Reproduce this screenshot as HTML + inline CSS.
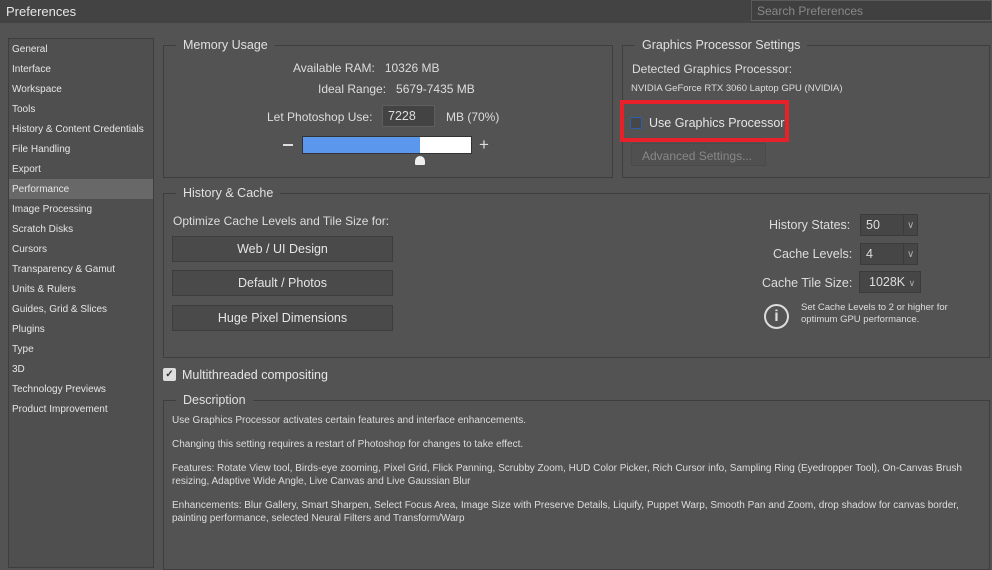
<!DOCTYPE html>
<html><head><style>
*{box-sizing:border-box;margin:0;padding:0}
body{width:992px;height:555px;background:#535353;font-family:"Liberation Sans",sans-serif;color:#ddd;position:relative;overflow:hidden}
.a{position:absolute;white-space:nowrap}
.title{left:0;top:0;width:992px;height:23px;background:#434343}
.fs{position:absolute;border:1px solid #3e3e3e}
.lg{position:absolute;top:-8px;left:12px;background:#535353;padding:0 7px;font-size:12.5px;color:#e0e0e0}
.side{left:8px;top:38px;width:146px;height:530px;border:1px solid #3e3e3e;background:#4f4f4f}
.side div{height:20px;line-height:21px;padding-left:3px;font-size:10px;color:#e6e6e6}
.btn{position:absolute;left:172px;width:221px;height:26px;background:#4a4a4a;border:1px solid #3d3d3d;text-align:center;line-height:25px;font-size:12.5px;color:#e6e6e6}
.sel{position:absolute;height:22px;border:1px solid #3b3b3b;background:#464646;font-size:12.5px;line-height:21px;padding-left:5px}
.sm{font-size:9.5px;color:#ddd}
.d{font-size:10px;color:#ddd}
</style></head><body>
<div class="a title"></div>
<div class="a" style="left:6px;top:4px;font-size:13px;color:#e6e6e6">Preferences</div>
<div class="a" style="left:751px;top:0;width:241px;height:21px;border:1px solid #5a5a5a;background:#404040;font-size:12px;color:#888;padding:3px 5px">Search Preferences</div>

<div class="a side">
<div>General</div><div>Interface</div><div>Workspace</div><div>Tools</div><div>History &amp; Content Credentials</div><div>File Handling</div><div>Export</div><div style="background:#686868">Performance</div><div>Image Processing</div><div>Scratch Disks</div><div>Cursors</div><div>Transparency &amp; Gamut</div><div>Units &amp; Rulers</div><div>Guides, Grid &amp; Slices</div><div>Plugins</div><div>Type</div><div>3D</div><div>Technology Previews</div><div>Product Improvement</div>
</div>

<div class="fs" style="left:163px;top:45px;width:450px;height:133px"><div class="lg">Memory Usage</div></div>
<div class="a" style="left:293px;top:61px;font-size:12px">Available RAM:&nbsp;&nbsp;&nbsp;10326 MB</div>
<div class="a" style="left:318px;top:82px;font-size:12px">Ideal Range:&nbsp;&nbsp;&nbsp;5679-7435 MB</div>
<div class="a" style="left:267px;top:110px;font-size:12px">Let Photoshop Use:</div>
<div class="a" style="left:382px;top:105px;width:53px;height:22px;background:#434343;border:1px solid #5e5e5e;font-size:12.5px;padding:3px 5px">7228</div>
<div class="a" style="left:446px;top:110px;font-size:12px">MB (70%)</div>
<div class="a" style="left:283px;top:144px;width:10px;height:2px;background:#ddd"></div>
<div class="a" style="left:302px;top:136px;width:170px;height:18px;background:#fff;border:1px solid #333"></div>
<div class="a" style="left:303px;top:137px;width:117px;height:16px;background:#5b97ec"></div>
<div class="a" style="left:415px;top:156px;width:10px;height:9px;background:#eee;border-radius:5px 5px 1px 1px"></div>
<div class="a" style="left:479px;top:137px;font-size:17px;line-height:15px">+</div>

<div class="fs" style="left:622px;top:45px;width:368px;height:133px"><div class="lg">Graphics Processor Settings</div></div>
<div class="a" style="left:632px;top:62px;font-size:12px">Detected Graphics Processor:</div>
<div class="a" style="left:631px;top:83px;font-size:9.5px">NVIDIA GeForce RTX 3060 Laptop GPU (NVIDIA)</div>
<div class="a" style="left:620px;top:100px;width:169px;height:42px;border:4px solid #e8202a"></div>
<div class="a" style="left:630px;top:117px;width:12px;height:12px;border:1px solid #2f5ea8;background:#474747;border-radius:2px"></div>
<div class="a" style="left:649px;top:116px;font-size:12.5px;color:#e6e6e6">Use Graphics Processor</div>
<div class="a" style="left:631px;top:143px;width:135px;height:23px;border:1px solid #4a4a4a;background:#505050;font-size:12px;color:#888;padding:5px 10px">Advanced Settings...</div>

<div class="fs" style="left:163px;top:193px;width:827px;height:165px"><div class="lg">History &amp; Cache</div></div>
<div class="a" style="left:173px;top:214px;font-size:12px">Optimize Cache Levels and Tile Size for:</div>
<div class="btn" style="top:236px">Web / UI Design</div>
<div class="btn" style="top:270px">Default / Photos</div>
<div class="btn" style="top:305px">Huge Pixel Dimensions</div>
<div class="a" style="left:769px;top:218px;font-size:12.5px">History States:</div>
<div class="sel" style="left:860px;top:214px;width:58px">50<span style="position:absolute;left:42px;top:0;height:20px;border-left:1px solid #3b3b3b;padding-left:3px;font-size:10px;color:#aaa">&#8744;</span></div>
<div class="a" style="left:773px;top:247px;font-size:12.5px">Cache Levels:</div>
<div class="sel" style="left:860px;top:243px;width:58px">4<span style="position:absolute;left:42px;top:0;height:20px;border-left:1px solid #3b3b3b;padding-left:3px;font-size:10px;color:#aaa">&#8744;</span></div>
<div class="a" style="left:762px;top:276px;font-size:12.5px">Cache Tile Size:</div>
<div class="sel" style="left:859px;top:271px;width:62px;padding-left:9px">1028K <span style="font-size:9px;color:#aaa">&#8744;</span></div>
<div class="a" style="left:764px;top:304px;width:25px;height:25px;border:2px solid #ddd;border-radius:50%;text-align:center;font-size:16px;font-weight:bold;line-height:21px">i</div>
<div class="a sm" style="left:801px;top:302px;line-height:12px">Set Cache Levels to 2 or higher for<br>optimum GPU performance.</div>

<div class="a" style="left:163px;top:368px;width:13px;height:13px;background:#ddd;border-radius:2px;color:#333;font-size:10px;line-height:13px;text-align:center;font-weight:bold">&#10003;</div>
<div class="a" style="left:182px;top:368px;font-size:12.5px;color:#e6e6e6">Multithreaded compositing</div>

<div class="fs" style="left:163px;top:400px;width:827px;height:170px"><div class="lg">Description</div></div>
<div class="a d" style="left:172px;top:415px">Use Graphics Processor activates certain features and interface enhancements.</div>
<div class="a d" style="left:172px;top:439px">Changing this setting requires a restart of Photoshop for changes to take effect.</div>
<div class="a d" style="left:172px;top:462px;line-height:13px">Features: Rotate View tool, Birds-eye zooming, Pixel Grid, Flick Panning, Scrubby Zoom, HUD Color Picker, Rich Cursor info, Sampling Ring (Eyedropper Tool), On-Canvas Brush<br>resizing, Adaptive Wide Angle, Live Canvas and Live Gaussian Blur</div>
<div class="a d" style="left:172px;top:499px;line-height:13px">Enhancements: Blur Gallery, Smart Sharpen, Select Focus Area, Image Size with Preserve Details, Liquify, Puppet Warp, Smooth Pan and Zoom, drop shadow for canvas border,<br>painting performance, selected Neural Filters and Transform/Warp</div>
</body></html>
